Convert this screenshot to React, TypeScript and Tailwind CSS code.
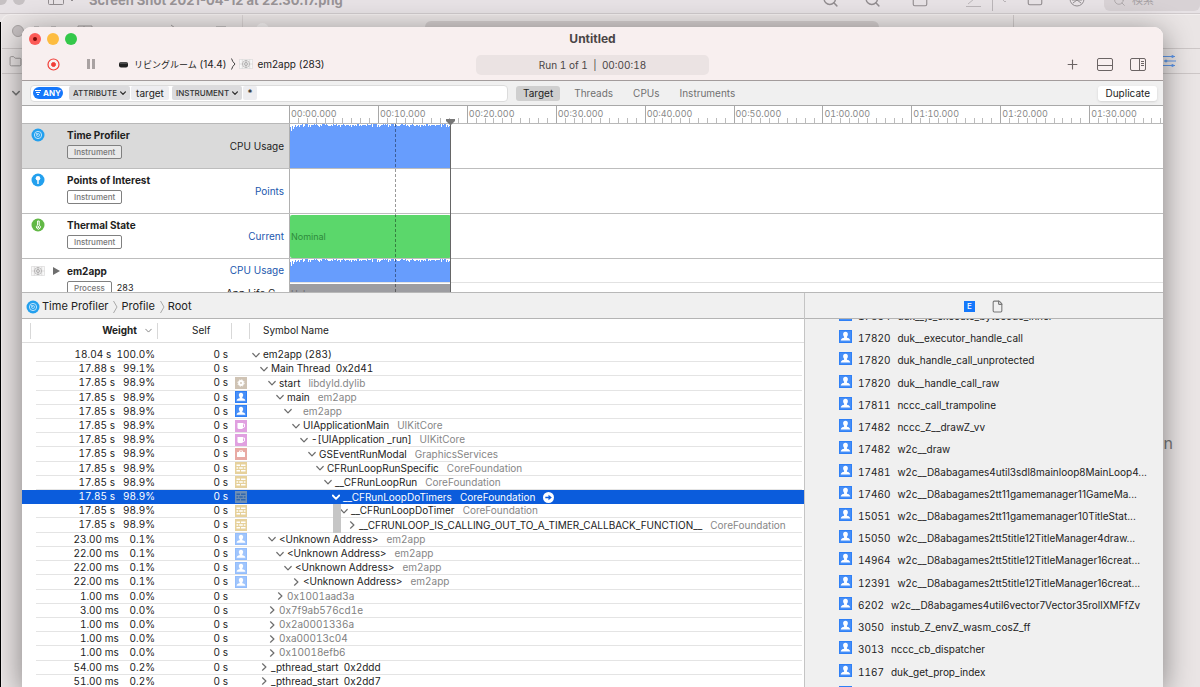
import React from 'react';
import { File, Folder, Plus, Search, Square } from 'lucide-react';

type IconKind = 'gear' | 'user' | 'cup' | 'case' | 'brick' | 'userLight';

interface TreeRow {
  weight: string;
  percent: string;
  level: number;
  name?: string;
  lib?: string;
  icon?: IconKind;
  collapsed?: boolean;
  dim?: boolean;
  selected?: boolean;
  guide?: boolean;
}

const treeRows: TreeRow[] = [
  { weight: '18.04 s', percent: '100.0%', level: 0, name: 'em2app (283)' },
  { weight: '17.88 s', percent: '99.1%', level: 1, name: 'Main Thread  0x2d41' },
  { weight: '17.85 s', percent: '98.9%', level: 2, name: 'start', lib: 'libdyld.dylib', icon: 'gear' },
  { weight: '17.85 s', percent: '98.9%', level: 3, name: 'main', lib: 'em2app', icon: 'user' },
  { weight: '17.85 s', percent: '98.9%', level: 4, lib: 'em2app', icon: 'user' },
  { weight: '17.85 s', percent: '98.9%', level: 5, name: 'UIApplicationMain', lib: 'UIKitCore', icon: 'cup' },
  { weight: '17.85 s', percent: '98.9%', level: 6, name: '-[UIApplication _run]', lib: 'UIKitCore', icon: 'cup' },
  { weight: '17.85 s', percent: '98.9%', level: 7, name: 'GSEventRunModal', lib: 'GraphicsServices', icon: 'case' },
  { weight: '17.85 s', percent: '98.9%', level: 8, name: 'CFRunLoopRunSpecific', lib: 'CoreFoundation', icon: 'brick' },
  { weight: '17.85 s', percent: '98.9%', level: 9, name: '__CFRunLoopRun', lib: 'CoreFoundation', icon: 'brick' },
  { weight: '17.85 s', percent: '98.9%', level: 10, name: '__CFRunLoopDoTimers', lib: 'CoreFoundation', icon: 'brick', selected: true },
  { weight: '17.85 s', percent: '98.9%', level: 11, name: '__CFRunLoopDoTimer', lib: 'CoreFoundation', icon: 'brick', guide: true },
  { weight: '17.85 s', percent: '98.9%', level: 12, name: '__CFRUNLOOP_IS_CALLING_OUT_TO_A_TIMER_CALLBACK_FUNCTION__', lib: 'CoreFoundation', icon: 'brick', guide: true, collapsed: true },
  { weight: '23.00 ms', percent: '0.1%', level: 2, name: '<Unknown Address>', lib: 'em2app', icon: 'userLight' },
  { weight: '22.00 ms', percent: '0.1%', level: 3, name: '<Unknown Address>', lib: 'em2app', icon: 'userLight' },
  { weight: '22.00 ms', percent: '0.1%', level: 4, name: '<Unknown Address>', lib: 'em2app', icon: 'userLight' },
  { weight: '22.00 ms', percent: '0.1%', level: 5, name: '<Unknown Address>', lib: 'em2app', icon: 'userLight', collapsed: true },
  { weight: '1.00 ms', percent: '0.0%', level: 3, name: '0x1001aad3a', collapsed: true, dim: true },
  { weight: '3.00 ms', percent: '0.0%', level: 2, name: '0x7f9ab576cd1e', collapsed: true, dim: true },
  { weight: '1.00 ms', percent: '0.0%', level: 2, name: '0x2a0001336a', collapsed: true, dim: true },
  { weight: '1.00 ms', percent: '0.0%', level: 2, name: '0xa00013c04', collapsed: true, dim: true },
  { weight: '1.00 ms', percent: '0.0%', level: 2, name: '0x10018efb6', collapsed: true, dim: true },
  { weight: '54.00 ms', percent: '0.2%', level: 1, name: '_pthread_start  0x2ddd', collapsed: true },
  { weight: '51.00 ms', percent: '0.2%', level: 1, name: '_pthread_start  0x2dd7', collapsed: true },
];

const stackRows: [string, string][] = [
  ['17834', 'duk__js_execute_bytecode_inner'],
  ['17820', 'duk__executor_handle_call'],
  ['17820', 'duk_handle_call_unprotected'],
  ['17820', 'duk__handle_call_raw'],
  ['17811', 'nccc_call_trampoline'],
  ['17482', 'nccc_Z__drawZ_vv'],
  ['17482', 'w2c__draw'],
  ['17481', 'w2c__D8abagames4util3sdl8mainloop8MainLoop4...'],
  ['17460', 'w2c__D8abagames2tt11gamemanager11GameMa...'],
  ['15051', 'w2c__D8abagames2tt11gamemanager10TitleStat...'],
  ['15050', 'w2c__D8abagames2tt5title12TitleManager4draw...'],
  ['14964', 'w2c__D8abagames2tt5title12TitleManager16creat...'],
  ['12391', 'w2c__D8abagames2tt5title12TitleManager16creat...'],
  ['6202', 'w2c__D8abagames4util6vector7Vector35rollXMFfZv'],
  ['3050', 'instub_Z_envZ_wasm_cosZ_ff'],
  ['3013', 'nccc_cb_dispatcher'],
  ['1167', 'duk_get_prop_index'],
  ['1102', 'duk_push_string'],
];

const rulerLabels = [
  '00:00.000', '00:10.000', '00:20.000', '00:30.000', '00:40.000',
  '00:50.000', '01:00.000', '01:10.000', '01:20.000', '01:30.000',
];

const iconFill: Record<IconKind, string> = {
  gear: '#cfc3b4',
  user: '#2f80f6',
  cup: '#e0a0e0',
  case: '#e8aaa4',
  brick: '#e6d19b',
  userLight: '#93bdfc',
};

const FrameIcon = ({ kind, selected = false, size = 12 }: { kind: IconKind; selected?: boolean; size?: number }) => (
  <svg width={size} height={size} viewBox="0 0 12 12" aria-hidden="true">
    <rect width="12" height="12" fill={selected ? '#6f8fb4' : iconFill[kind]} />
    {(kind === 'user' || kind === 'userLight') && (
      <>
        <rect x="1" y="1" width="10" height="10" fill="#fff" opacity="0.12" />
        <path d="M6 1.7c1.5 0 2.200 1 2.200 2.300 0 1-.4 1.700-.9 2.200v.8c.4.6 3 .6 3 2.800H1.700c0-2.200 2.600-2.200 3-2.800v-.8C4.200 5.700 3.800 5 3.800 4c0-1.300.7-2.300 2.200-2.300z" fill="#fff" />
      </>
    )}
    {kind === 'gear' && (
      <>
        <circle cx="6" cy="6" r="2.900" fill="#fff" />
        <circle cx="6" cy="6" r="3.200" fill="none" stroke="#fff" strokeWidth="1" strokeDasharray="1.300 1.200" />
        <circle cx="6" cy="6" r="0.900" fill="#cfc3b4" />
      </>
    )}
    {kind === 'cup' && (
      <>
        <path d="M2.500 3h5.500v4.500a1.500 1.500 0 0 1-1.500 1.500H4a1.500 1.500 0 0 1-1.500-1.500z" fill="#fff" />
        <path d="M8 4h1.500v3L8 7.800" fill="none" stroke="#fff" strokeWidth="0.900" />
      </>
    )}
    {kind === 'case' && (
      <>
        <rect x="2" y="4" width="8" height="5" rx="0.600" fill="#fff" />
        <path d="M4.500 4V2.900h3V4" fill="none" stroke="#fff" strokeWidth="0.900" />
      </>
    )}
    {kind === 'brick' && (
      <path
        d="M1.500 2.500h3.500v1.500H1.500zM6 2.500h4.500v1.500H6zM1.500 5.200h1.700v1.500H1.500zM4.200 5.200h3.600v1.500H4.200zM8.800 5.200h1.700v1.500H8.800zM1.500 8h3.500v1.500H1.500zM6 8h4.500v1.500H6z"
        fill={selected ? '#2f66ad' : '#fff'}
      />
    )}
  </svg>
);

interface DisclosureProps {
  collapsed?: boolean;
  size?: number;
  className?: string;
  strokeWidth?: number;
}

const Disclosure = ({ collapsed, size = 8, className = '', strokeWidth = 1.2 }: DisclosureProps) => (
  <svg
    width={size}
    height={size}
    viewBox="0 0 8 8"
    fill="none"
    stroke="currentColor"
    strokeWidth={strokeWidth}
    strokeLinecap="round"
    strokeLinejoin="round"
    className={className}
    aria-hidden="true"
  >
    <path d={collapsed ? 'M2.500 0.800L5.900 4L2.500 7.200' : 'M0.800 2.500L4 5.800L7.200 2.500'} />
  </svg>
);

const TimerIcon = () => (
  <svg width="14" height="14" viewBox="0 0 14 14" aria-hidden="true">
    <circle cx="7" cy="7" r="6.500" fill="#23a0ee" />
    <circle cx="7" cy="7" r="3.600" fill="none" stroke="#bfe4fb" strokeWidth="1" />
    <circle cx="7" cy="7" r="1.500" fill="none" stroke="#bfe4fb" strokeWidth="0.800" />
    <path d="M7 7L4.800 4.800" stroke="#bfe4fb" strokeWidth="0.800" />
  </svg>
);

const PinIcon = () => (
  <svg width="14" height="14" viewBox="0 0 14 14" aria-hidden="true">
    <circle cx="7" cy="7" r="6.500" fill="#23a0ee" />
    <circle cx="7" cy="5.300" r="2.300" fill="#fff" />
    <rect x="6.300" y="6.500" width="1.400" height="4.500" fill="#fff" />
  </svg>
);

const ThermalIcon = () => (
  <svg width="14" height="14" viewBox="0 0 14 14" aria-hidden="true">
    <circle cx="7" cy="7" r="6.500" fill="#62b846" />
    <path d="M6.600 3h1.600v4.200a2 2 0 1 1-1.600 0z" fill="none" stroke="#fff" strokeWidth="1" />
    <circle cx="7.300" cy="9" r="1" fill="#fff" />
  </svg>
);

const AppIcon = () => (
  <svg width="14" height="10" viewBox="0 0 14 10" fill="none" stroke="#b3b0b0" strokeWidth="0.600" aria-hidden="true">
    <rect x="0.300" y="0.300" width="13.400" height="9.400" rx="1" fill="#f8f8f8" stroke="#cfcccc" />
    <path d="M0.500 5h13M3.300 0.500v9M10.700 0.500v9" stroke="#d0cdcd" />
    <circle cx="7" cy="5" r="3.500" stroke="#9b9898" />
    <circle cx="7" cy="5" r="1.700" stroke="#9b9898" />
    <path d="M7 1v8" stroke="#9b9898" />
  </svg>
);

const Crumb = () => (
  <svg width="5" height="14" viewBox="0 0 5 14" fill="none" stroke="#a8a8a8" aria-hidden="true">
    <path d="M0.500 1L4 7L0.500 13" />
  </svg>
);

const CpuGraph = ({ height }: { height: number }) => {
  // top edge of the load graph, one step every px
  let d = `M0 ${height}`;
  for (let x = 0; x < 160; x++) {
    const n = (x * 37 + ((x * x) % 23) + (x % 7) * 5) % 13;
    const y = x < 10 ? [3, 7, 2, 5, 3, 1, 3, 2, 1, 3][x] : n < 6 ? 1 : n < 9 ? 0 : n < 12 ? 2 : 3;
    d += `L${x} ${y}L${x + 1} ${y}`;
  }
  d += `L160 ${height}Z`;
  return (
    <svg width="160" height={height} className="block" role="img" aria-label="CPU usage graph">
      <path d={d} fill="#679dfd" />
    </svg>
  );
};

const Badge = ({ children }: { children: React.ReactNode }) => (
  <span className="flex h-[14px] items-center rounded-[2px] border border-[#808080] bg-white/40 px-[6px] text-[8px] font-medium leading-none text-[#777]">
    {children}
  </span>
);

interface TrackProps {
  icon: React.ReactNode;
  title: string;
  label: string;
  selected?: boolean;
  children?: React.ReactNode;
}

const Track: React.FC<TrackProps> = ({ icon, title, label, selected, children }) => (
  <section className="flex h-[45px] shrink-0 border-b border-[#bdbdbd]">
    <div
      className={`flex w-[268px] shrink-0 items-start border-r border-[#b0b0b0] pr-[5px] ${
        selected ? 'bg-[#dadada]' : 'bg-white'
      }`}
    >
      <div className="flex w-[45px] shrink-0 pl-[9px] pt-1">{icon}</div>
      <div className="flex flex-1 flex-col items-start pt-1">
        <h2 className="mb-[3px] text-[10px] font-bold leading-[14px] text-[#222]">{title}</h2>
        <Badge>Instrument</Badge>
      </div>
      <span className={`self-center text-[10px] ${selected ? 'text-[#222]' : 'text-[#1b57ae]'}`}>{label}</span>
    </div>
    <div className="min-w-0 flex-1 bg-white">{children}</div>
  </section>
);

const FilterSelect = ({ value, width }: { value: string; width: string }) => (
  <div className={`relative flex h-[14px] items-center rounded-[2px] bg-[#dbdbdd] ${width}`}>
    <select
      aria-label={`Filter by ${value.toLowerCase()}`}
      className="h-[14px] w-full appearance-none bg-transparent pl-1 text-[8px] font-medium leading-[14px] text-[#333] outline-none"
    >
      <option>{value}</option>
    </select>
    <Disclosure size={6} strokeWidth={1.8} className="pointer-events-none absolute right-1 top-1 text-[#333]" />
  </div>
);

const DesktopWindows = () => (
  <div className="absolute inset-0 overflow-hidden bg-[#e9e4e5]" aria-hidden="true">
    {/* Xcode window */}
    <div className="absolute inset-x-0 bottom-0 top-[22px] w-px bg-black" />
    <div className="absolute bottom-0 left-px right-0 top-[14px] rounded-tl-[9px] border-l border-t border-[#f2eeee] bg-[#eae5e5]">
      <div className="flex h-[34px] items-start border-b border-[#cdc7c7]">
        <span className="ml-[10px] mt-[10px] h-[12px] w-[12px] rounded-full border border-[#aaa5a5] bg-[#c8c2c3]" />
        <svg width="70" height="13" className="ml-2" fill="none" stroke="#a19c9c">
          <path d="M2 12h5M19 12h5M46 13v-2h14v2M52 11v2" />
        </svg>
        <svg width="142" height="13" fill="none" stroke="#a19c9c">
          <path d="M69 10l4 3M114 12h10" />
          <path d="M140.500 0v13" stroke="#d8d2d2" />
        </svg>
        <span className="ml-[12px] mt-2 h-[13px] w-[13px] rounded-full bg-[#f6f3f3]" />
        <span className="ml-[156px] mt-[6px] h-[14px] w-[454px] rounded-md bg-[#d3cdcd]" />
        <span className="ml-[134px] h-[34px] w-px bg-[#cdc7c7]" />
      </div>
      <div className="flex h-[25px] items-center justify-between border-b border-[#cdc7c7] pl-[7px] pr-[24px]">
        <Folder size={13} strokeWidth={1.5} className="text-[#8f8a8a]" />
        <svg width="13" height="12" viewBox="0 0 13 12" stroke="#5e97ea" strokeWidth="1" fill="#5e97ea">
          <path d="M0 1.500h12M1 6h12M0 10.500h12" />
          <circle cx="9.500" cy="1.500" r="1" />
          <circle cx="3" cy="6" r="1" />
          <circle cx="9.500" cy="10.500" r="1" />
        </svg>
      </div>
      <div className="flex justify-between pl-[10px] pr-[27px] pt-[15px]">
        <Disclosure strokeWidth={1.6} className="text-[#777]" />
        <span className="pt-[342px] text-[16px] leading-[24px] text-[#777]">n</span>
      </div>
    </div>
    {/* Preview window toolbar */}
    <div className="absolute inset-x-0 top-0 flex h-[14px] items-end overflow-hidden border-b border-[#d0cacc] bg-[#e7e2e5] text-[#928d90]">
      <span className="mb-[8px] h-[12px] w-[7px] shrink-0 rounded-r-full bg-[#c6c1c3]" />
      <span className="mb-[8px] ml-[6px] h-[12px] w-[12px] shrink-0 rounded-full bg-[#c6c1c3]" />
      <svg width="30" height="8" className="mb-[6px] ml-[22px] shrink-0" fill="none" stroke="#928d90">
        <path d="M1.500 0v4.500q0 1 1 1h13q1 0 1-1V0M6.500 0v5.500M23 0l2 2l2-2" />
      </svg>
      <span className="mb-[5px] ml-[12px] whitespace-nowrap text-[13px] font-bold leading-[16px] text-[#989396]">
        Screen Shot 2021-04-12 at 22.30.17.png
      </span>
      <div className="ml-auto flex items-end">
        <Search size={17} strokeWidth={2} className="mb-[5px] mr-[25px] shrink-0" />
        <Search size={17} strokeWidth={2} className="mb-[5px] mr-[30px] shrink-0" />
        <Square size={18} strokeWidth={1.5} className="mb-[5px] mr-[37px] shrink-0" />
        <svg width="40" height="12" className="mb-[2px] mr-[20px]" fill="none" stroke="#bab5b8">
          <path d="M0 7.500h15M2 5L8 0M26.500 0v12M37 1l2 2l2-2" />
        </svg>
        <Square size={18} strokeWidth={1.5} className="mb-[6px] mr-[25px] shrink-0" />
        <svg width="16" height="16" viewBox="0 0 16 16" className="mb-[6px] mr-[19px] shrink-0" fill="none" stroke="#928d90">
          <circle cx="8" cy="8" r="7" />
          <path d="M8 3v7M4 12l4-3l4 3M3 9h10" />
        </svg>
        <span className="mb-[2px] flex h-[18px] w-[96px] items-end gap-[6px] rounded-md bg-[#d8d2d5] pb-[3px] pl-[9px] text-[11px] leading-[16px] text-[#a5a0a3]">
          <Search size={13} strokeWidth={1.5} className="mb-[1px] shrink-0" />
          検索
        </span>
      </div>
    </div>
  </div>
);

const Toolbar = () => (
  <header className="shrink-0 border-b border-[#a39c9c] bg-[#f8efef]">
    <div className="grid h-[24px] grid-cols-[1fr_auto_1fr] items-center">
      <div className="flex gap-[6px] pl-[7px]">
        <button aria-label="Close" className="flex h-3 w-3 items-center justify-center rounded-full bg-[#fc5b57]">
          <span className="h-1 w-1 rounded-full bg-[#7d0a08]" />
        </button>
        <button aria-label="Minimize" className="h-3 w-3 rounded-full bg-[#fdbc40]" />
        <button aria-label="Zoom" className="h-3 w-3 rounded-full bg-[#34c84a]" />
      </div>
      <h1 className="text-[12px] font-bold text-[#4a4545]">Untitled</h1>
    </div>
    <div className="grid h-[29px] grid-cols-[1fr_233px_1fr] items-start">
      <div className="flex h-[26px] items-center pl-[25px] text-[10px] text-[#222]">
        <button aria-label="Record">
          <svg width="13" height="13" viewBox="0 0 13 13" fill="none" stroke="#f13d37">
            <circle cx="6.500" cy="6.500" r="5.500" strokeWidth="1.200" />
            <circle cx="6.500" cy="6.500" r="2" fill="#f13d37" />
          </svg>
        </button>
        <button aria-label="Pause" className="ml-[27px] flex gap-[2px]">
          <span className="h-[10px] w-[3px] bg-[#a9a2a2]" />
          <span className="h-[10px] w-[3px] bg-[#a9a2a2]" />
        </button>
        <svg width="9" height="6" viewBox="0 0 9 6" className="ml-[24px] mt-[2px]">
          <rect width="9" height="5.500" rx="2" fill="#222" />
          <rect x="1" y="0.500" width="7" height="1" rx="0.500" fill="#777" />
        </svg>
        <span className="ml-[6px] whitespace-nowrap">
          <span className="text-[9px]">リビングルーム</span> (14.4)
        </span>
        <svg width="5" height="12" viewBox="0 0 5 12" fill="none" stroke="#444" className="ml-[5px] mr-[3px]">
          <path d="M0.500 0.500Q1.500 4 4 6Q1.500 8 0.500 11.500" />
        </svg>
        <AppIcon />
        <span className="ml-1">em2app (283)</span>
      </div>
      <div className="mt-1 flex h-5 items-center justify-center rounded-[5px] bg-[#ebe3e3] text-[10px] tabular-nums text-[#4a4545]">
        Run 1 of 1 &nbsp;|&nbsp; 00:00:18
      </div>
      <div className="flex h-[26px] items-center justify-end gap-[17px] pr-[17px] text-[#6b6464]">
        <button aria-label="Add">
          <Plus size={15} strokeWidth={1.8} />
        </button>
        <button aria-label="Toggle detail area">
          <svg width="16" height="13" viewBox="0 0 16 13" fill="none" stroke="currentColor">
            <rect x="0.500" y="0.500" width="15" height="12" rx="1.500" />
            <path d="M0.500 7.500h15" />
          </svg>
        </button>
        <button aria-label="Toggle inspector">
          <svg width="16" height="13" viewBox="0 0 16 13" fill="none" stroke="currentColor">
            <rect x="0.500" y="0.500" width="15" height="12" rx="1.500" />
            <path d="M9.500 0.500v12M11 3.500h3M11 5.500h3M11 7.500h3" />
          </svg>
        </button>
      </div>
    </div>
  </header>
);

const FilterBar = () => (
  <div className="flex h-[25px] shrink-0 items-center border-b border-[#a8a8a8] bg-[#f0f0f0] pl-2 pr-[6px]">
    <div className="flex h-[17px] w-[478px] shrink-0 items-center rounded-[4px] border border-[#dcdcdc] bg-white pl-[2px]">
      <button className="flex h-3 w-[30px] items-center justify-center gap-[2px] rounded-full bg-[#1578fb] text-[8px] font-bold leading-none text-white">
        <svg width="6" height="6" stroke="#fff">
          <path d="M0 0.500h6M1 2.500h4M2 4.500h2" />
        </svg>
        ANY
      </button>
      <div className="ml-[6px] flex gap-px">
        <FilterSelect value="ATTRIBUTE" width="w-[61px]" />
        <input
          aria-label="Attribute value"
          defaultValue="target"
          className="h-[14px] w-[38px] rounded-[2px] bg-[#ededf0] text-center text-[10px] text-[#222] outline-none"
        />
      </div>
      <div className="ml-[3px] flex gap-px">
        <FilterSelect value="INSTRUMENT" width="w-[70px]" />
        <input
          aria-label="Instrument value"
          defaultValue="*"
          className="h-[14px] w-[14px] rounded-[2px] bg-[#ededf0] text-center text-[10px] text-[#222] outline-none"
        />
      </div>
    </div>
    <nav className="ml-2 flex items-center gap-2 text-[10px] text-[#707070]">
      <button className="h-[15px] rounded-[3px] bg-[#cfcfcf] px-[7px] text-[#222]">Target</button>
      <button className="px-[6px]">Threads</button>
      <button className="px-[6px]">CPUs</button>
      <button className="px-[6px]">Instruments</button>
    </nav>
    <button className="ml-auto h-[15px] rounded-[3px] bg-white px-[7px] text-[10px] text-[#222] shadow">Duplicate</button>
  </div>
);

const Ruler = () => (
  <div className="flex h-[18px] shrink-0 border-b border-[#b8b8b8] bg-white pl-[267px]">
    <div className="min-w-0 flex-1 overflow-hidden">
      <div className="flex h-full w-[889px]">
        {rulerLabels.map((label) => (
          <div key={label} className="relative flex flex-1 items-end border-l border-[#a8a8a8]">
            {Array.from({ length: 10 }, (_, i) => (
              <span key={i} className={`h-[5px] flex-1 ${i > 0 ? 'border-l border-[#bbb]' : ''}`} />
            ))}
            <span className="absolute left-px top-[2px] text-[9px] leading-[12px] tabular-nums text-[#8a8a8a]">{label}</span>
          </div>
        ))}
      </div>
    </div>
  </div>
);

const Timeline = () => (
  <div className="relative shrink-0">
    <Ruler />
    <div className="flex h-[168px] flex-col overflow-hidden">
      <Track icon={<TimerIcon />} title="Time Profiler" label="CPU Usage" selected>
        <CpuGraph height={44} />
      </Track>
      <Track icon={<PinIcon />} title="Points of Interest" label="Points" />
      <Track icon={<ThermalIcon />} title="Thermal State" label="Current">
        <div className="mt-px flex h-[43px] w-[161px] items-center rounded-[2px] bg-[#5bd76b] pl-px text-[9px] text-[#2f8a3c]">
          Nominal
        </div>
      </Track>
      <section className="flex shrink-0 bg-white">
        <div className="flex w-[268px] shrink-0 items-start border-r border-[#b0b0b0] pr-[5px]">
          <div className="flex h-6 w-[45px] shrink-0 items-center gap-2 pl-[9px]">
            <AppIcon />
            <svg width="7" height="8">
              <path d="M0 0L7 4L0 8z" fill="#6e6e6e" />
            </svg>
          </div>
          <div className="flex flex-1 flex-col items-start pt-[5px]">
            <h2 className="mb-[3px] text-[10px] font-bold leading-[14px] text-[#222]">em2app</h2>
            <div className="flex items-center gap-[5px] text-[9px] leading-[14px] text-[#222]">
              <Badge>Process</Badge>
              283
            </div>
          </div>
          <div className="flex flex-col text-[10px]">
            <span className="flex h-[23px] items-center justify-end text-[#1b57ae]">CPU Usage</span>
            <span className="flex h-[22px] items-center text-[#222]">App Life C…</span>
          </div>
        </div>
        <div className="flex-1">
          <div className="border-b border-[#e2e2e2]">
            <CpuGraph height={23} />
          </div>
          <div className="mt-px flex h-5 w-[161px] items-center bg-[#9d9da1] pl-px text-[9px] text-[#6b6b6f]">Unknown</div>
        </div>
      </section>
    </div>
    {/* inspection line and end-of-run marker */}
    <div className="absolute bottom-0 left-[373px] top-[18px] border-l border-dashed border-black/40" />
    <div className="absolute bottom-0 left-[428px] top-[18px] w-px bg-[#666]" />
    <svg width="9" height="6" className="absolute left-[424px] top-[13px]">
      <path d="M0 0h9v2L5 6H4L0 2z" fill="#777" />
    </svg>
  </div>
);

const CallTree = () => (
  <table className="block text-[10px] leading-[13px] tabular-nums text-[#222]">
    <thead className="block">
      <tr className="flex h-6 items-center border-b border-[#dedede] pl-2">
        <th scope="col" className="flex h-4 w-[128px] items-center justify-end gap-2 border-x border-[#d8d8d8] pr-[5px] font-bold">
          Weight
          <Disclosure size={7} strokeWidth={1} className="text-[#777]" />
        </th>
        <th scope="col" className="h-4 w-[74px] border-r border-[#d8d8d8] pl-[34px] pt-px text-left font-normal">Self</th>
        <th scope="col" aria-label="Library" className="h-4 w-[18px] border-r border-[#d8d8d8]" />
        <th scope="col" className="pl-[13px] text-left font-normal">Symbol Name</th>
      </tr>
    </thead>
    <tbody className="grid h-[346px] auto-rows-fr pt-[5px]">
      {treeRows.map((row, i) => {
        const line = row.selected ? '' : 'border-b border-[#e4e4e4]';
        // two spaces after the weight, one more for each missing percent digit
        const gap = ' '.repeat(8 - row.percent.length);
        return (
          <tr key={i} className={`flex pl-[14px] ${row.selected ? 'bg-[#0b5cdc] text-white' : 'pr-[2px]'}`}>
            <td className={`w-[122px] shrink-0 whitespace-pre pr-[3px] text-right ${line}`}>
              {row.weight + gap + row.percent}
            </td>
            <td className={`w-[73px] shrink-0 pr-[3px] text-right ${line}`}>0 s</td>
            <td className={`flex w-[19px] shrink-0 items-center justify-center ${line}`}>
              {row.icon && <FrameIcon kind={row.icon} selected={row.selected} />}
            </td>
            <td
              className={`relative flex min-w-0 flex-1 items-center whitespace-pre ${line}`}
              style={{ paddingLeft: 2 + row.level * 8 }}
            >
              {row.guide && <span className="absolute -bottom-px left-[83px] top-0 w-2 bg-[#c6c6c6]" />}
              <Disclosure
                collapsed={row.collapsed}
                strokeWidth={row.selected ? 1.8 : 1.2}
                className={`mr-[3px] shrink-0 ${row.selected ? 'text-white' : 'text-[#6e6e6e]'}`}
              />
              <span className={row.dim ? 'text-[#808080]' : ''}>{row.name}</span>
              {row.lib && <span className={`ml-2 ${row.selected ? '' : 'text-[#868686]'}`}>{row.lib}</span>}
              {row.selected && (
                <button aria-label="Focus" className="ml-2">
                  <svg width="11" height="11" viewBox="0 0 11 11" className="block">
                    <circle cx="5.500" cy="5.500" r="5.500" fill="#fff" />
                    <path d="M2.300 4.700h3.200V2.800L8.800 5.500L5.500 8.200V6.300H2.300z" fill="#0b5cdc" />
                  </svg>
                </button>
              )}
            </td>
          </tr>
        );
      })}
    </tbody>
  </table>
);

const StackInspector = () => (
  <aside className="flex w-[359px] shrink-0 flex-col overflow-hidden border-l border-[#c4c4c4] bg-[#f0f0f0]">
    <div className="flex h-[26px] shrink-0 items-center justify-center gap-4 border-b border-[#b4b4b4] pt-px">
      <button
        aria-label="Extended detail"
        className="flex h-[11px] w-[11px] items-center justify-center bg-[#1578fb] text-[8px] font-medium leading-none text-white"
      >
        E
      </button>
      <button aria-label="Run info">
        <File size={13} strokeWidth={2} className="text-[#777]" />
      </button>
    </div>
    <div className="min-h-0 flex-1 overflow-hidden">
      <ul className="-mt-[15px] grid h-[400px] auto-rows-fr pl-[34px] text-[10px] leading-[13px] text-[#222]">
        {stackRows.map(([count, name], i) => (
          <li key={i} className="flex items-start">
            <span className="mr-[6px] mt-1">
              <FrameIcon kind="user" size={13} />
            </span>
            <span className="mt-[6px] flex gap-[7px] whitespace-nowrap">
              <span className="tabular-nums">{count}</span>
              <span>{name}</span>
            </span>
          </li>
        ))}
      </ul>
    </div>
  </aside>
);

export default function App() {
  return (
    <div className="relative h-screen overflow-hidden pl-[22px] pr-[37px] pt-[27px] font-['Inter','Noto_Sans_CJK_JP',sans-serif]">
      <DesktopWindows />
      <main className="relative flex h-full flex-col overflow-hidden rounded-t-[9px] bg-white shadow-[0_6px_30px_rgba(0,0,0,0.45)]">
        <Toolbar />
        <FilterBar />
        <Timeline />
        <div className="flex min-h-0 flex-1 border-t border-[#b8b8b8]">
          <div className="min-w-0 flex-1 overflow-hidden">
            <nav className="flex h-[26px] items-center border-b border-[#b4b4b4] bg-[#f0f0f0] pl-1 pt-[2px] text-[11px] text-[#222]">
              <TimerIcon />
              <a href="#time-profiler" className="ml-[2px] mr-[5px]">Time Profiler</a>
              <Crumb />
              <a href="#profile" className="ml-[3px] mr-[5px]">Profile</a>
              <Crumb />
              <a href="#root" className="ml-[3px]">Root</a>
            </nav>
            <CallTree />
          </div>
          <StackInspector />
        </div>
      </main>
    </div>
  );
}
